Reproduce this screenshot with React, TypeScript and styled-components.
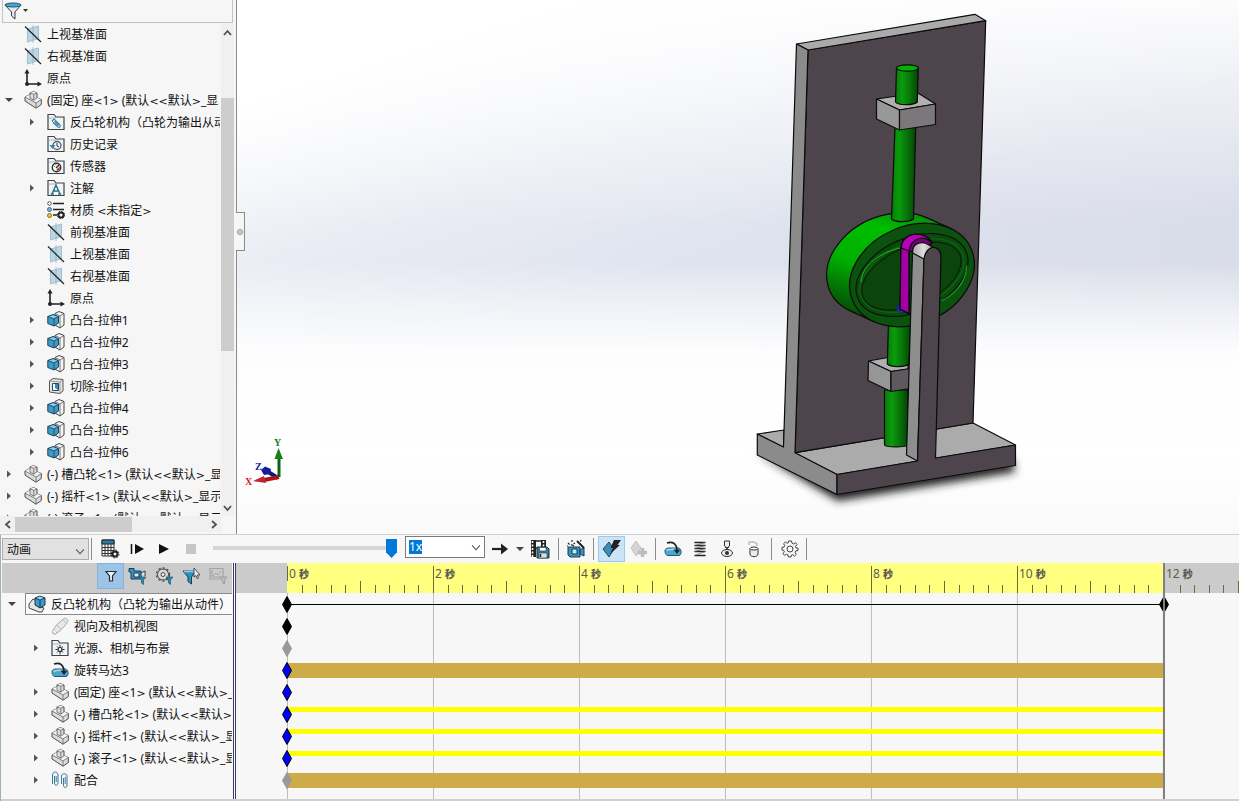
import React from "react";
import styled, { createGlobalStyle } from "styled-components";

const GlobalStyle = createGlobalStyle`
  *, *::before, *::after { box-sizing: border-box; }
  body { margin: 0; background: #f7f7f7; }
  button, input, select { font: inherit; color: inherit; }
  ul { list-style: none; margin: 0; padding: 0; }
`;

const Page = styled.div`
  display: flex;
  flex-direction: column;
  height: 100vh;
  overflow: hidden;
  background: #f7f7f7;
  color: #111;
  font: 12px/22px "Noto Sans", "Noto Sans CJK SC", sans-serif;
`;

const Workspace = styled.main`
  display: flex;
  flex: 1;
  min-height: 0;
`;

const SidePanel = styled.aside`
  display: flex;
  flex-direction: column;
  width: 237px;
  flex: none;
  border-right: 1px solid #8a8a8a;
  background: #f6f6f6;
`;

const FilterBar = styled.div`
  display: flex;
  align-items: center;
  height: 23px;
  flex: none;
  margin: 0 3px 0 2px;
  padding-left: 1px;
  border: 1px solid #c4c4c4;
  border-top: 0;
`;

const PlainButton = styled.button`
  display: flex;
  align-items: center;
  justify-content: center;
  padding: 0;
  border: 0;
  background: none;
`;

const TreeArea = styled.div`
  display: flex;
  flex: 1;
  min-height: 0;
`;

const Tree = styled.ul`
  flex: 1;
  min-width: 0;
  margin-right: 1px;
  overflow: hidden;
`;

const TreeRow = styled.li<{ $indent: number }>`
  display: flex;
  align-items: center;
  height: 22px;
  padding-left: ${(p) => p.$indent}px;
  white-space: nowrap;
`;

const Twisty = styled(PlainButton)<{ $gap: number }>`
  width: 10px;
  height: 22px;
  flex: none;
  margin-right: ${(p) => p.$gap}px;
`;

const IconSlot = styled.span`
  display: flex;
  flex: none;
  width: 18px;
  margin-right: 5px;
`;

const LabelText = styled.span`
  padding-top: 2px;
`;

const Bracket = styled.span`
  font: 11px/22px "DejaVu Sans", sans-serif;
`;

const VScroll = styled.div`
  display: flex;
  flex-direction: column;
  align-items: center;
  width: 13px;
  flex: none;
  margin-right: 2px;
  background: #f0f0f0;
`;

const HScroll = styled.div`
  display: flex;
  align-items: center;
  height: 16px;
  flex: none;
  margin: 0 15px 2px 0;
  background: #f0f0f0;
`;

const ScrollThumb = styled.div<{ $w: string; $h: string; $offset?: number }>`
  width: ${(p) => p.$w};
  height: ${(p) => p.$h};
  flex: none;
  margin-top: ${(p) => p.$offset || 0}px;
  background: #cdcdcd;
`;

const ScrollButton = styled(PlainButton)`
  width: 13px;
  height: 18px;
  margin: 0 1px;
  flex: none;
`;

const Spacer = styled.div`
  flex: 1;
`;

const Viewport = styled.section`
  position: relative;
  flex: 1;
  min-width: 0;
  background:
    linear-gradient(to bottom, transparent 49%, rgba(255, 255, 255, 0.5) 57%, #fdfdfe 66%, #fff 85%, #fafafb 100%),
    linear-gradient(162deg, #fff 12%, rgba(255, 255, 255, 0.3) 32%, rgba(255, 255, 255, 0) 48%),
    linear-gradient(to bottom, rgba(255, 255, 255, 0.9) 0, rgba(255, 255, 255, 0) 42%),
    linear-gradient(to right, #e0e4ef 0, #dfe3ee 50%, #d9dce9 100%);
`;

const Scene = styled.svg`
  display: block;
  width: 100%;
  height: 100%;
`;

const PanelHandle = styled.button`
  position: absolute;
  left: -1px;
  top: 212px;
  width: 9px;
  height: 39px;
  padding: 0;
  border: 1px solid #8a8a8a;
  border-left: 0;
  background: #f6f6f6;
  display: flex;
  align-items: center;
  justify-content: center;
`;

const HandleDot = styled.span`
  width: 6px;
  height: 6px;
  border: 1px solid #999;
  border-radius: 50%;
  background: #ccc;
`;

const MotionStudy = styled.section`
  flex: none;
  border-top: 1px solid #d0d0d0;
  border-left: 1px solid #9fb0b0;
`;

const Toolbar = styled.div`
  display: flex;
  align-items: center;
  height: 27px;
  padding-left: 1px;
`;

const StudySelect = styled.span`
  position: relative;
  display: flex;
  width: 87px;
  height: 22px;
  margin-right: 2px;
  svg { position: absolute; right: 4px; top: 8px; pointer-events: none; }
`;

const Select = styled.select`
  appearance: none;
  width: 100%;
  padding: 0 4px;
  border: 1px solid #adadad;
  border-radius: 0;
  background: #e1e1e1;
`;

const Playback = styled.div`
  display: flex;
  align-items: center;
  padding-left: 4px;
`;

const Rule = styled.span<{ $gap: number }>`
  width: 1px;
  height: 22px;
  flex: none;
  margin: 0 ${(p) => p.$gap}px;
  background: #8c8c8c;
`;

const Tool = styled(PlainButton)<{ $active?: boolean; $w?: number }>`
  width: ${(p) => p.$w || 27}px;
  height: 26px;
  flex: none;
  background: ${(p) => (p.$active ? "#cce4f7" : "none")};
  border: 1px solid ${(p) => (p.$active ? "#99c9ef" : "transparent")};
`;

const SpeedSlider = styled.input`
  appearance: none;
  width: 184px;
  height: 20px;
  margin: 0 8px 0 9px;
  background: linear-gradient(#d6d6d6, #d6d6d6) 0 7px / 100% 4px no-repeat;
  &::-webkit-slider-thumb {
    appearance: none;
    width: 11px;
    height: 19px;
    background: #0078d7;
    clip-path: polygon(0 0, 100% 0, 100% 70%, 50% 100%, 0 70%);
  }
`;

const SpeedBox = styled.div`
  display: flex;
  align-items: center;
  justify-content: space-between;
  width: 80px;
  height: 22px;
  flex: none;
  margin-bottom: 3px;
  padding: 0 3px;
  border: 1px solid #7a7a7a;
  background: #fff;
`;

const SpeedInput = styled.input`
  width: 13px;
  height: 14px;
  padding: 0;
  border: 0;
  background: #0078d7;
  color: #fff;
  line-height: 14px;
`;

const StudyBody = styled.div`
  display: flex;
  border-bottom: 2px solid #cfcfcf;
  padding-top: 1px;
`;

const StudyTree = styled.div`
  width: 231px;
  flex: none;
  padding-left: 1px;
  overflow: hidden;
`;

const StudyFilters = styled.div`
  display: flex;
  justify-content: flex-end;
  height: 30px;
  background: #cbcbcb;
`;

const FilterTool = styled(PlainButton)<{ $active?: boolean }>`
  width: 27px;
  height: 26px;
  background: ${(p) => (p.$active ? "#9dc3e6" : "none")};
  border: 1px solid ${(p) => (p.$active ? "#86b3dc" : "transparent")};
`;

const RootRow = styled.li`
  display: flex;
  height: 22px;
  padding-left: 5px;
  white-space: nowrap;
`;

const RootBox = styled.span`
  display: flex;
  flex: 1;
  align-items: center;
  padding-left: 2px;
  border: 1px solid #8a8a8a;
  border-right: 0;
  background: #fafafa;
`;

const Divider = styled.div`
  width: 3px;
  flex: none;
  margin-left: 1px;
  border: 1px solid #3a3a66;
  border-width: 0 1px;
  background: #fff;
`;

const Timeline = styled.div`
  flex: 1;
  min-width: 0;
`;

const Lane = styled.div<{ $h: number }>`
  display: flex;
  height: ${(p) => p.$h}px;
`;

const Lead = styled.div<{ $ruler?: boolean }>`
  width: 51px;
  flex: none;
  background: ${(p) => (p.$ruler ? "#cbcbcb" : "none")};
`;

const Tail = styled.div<{ $ruler?: boolean }>`
  position: relative;
  z-index: 1;
  width: 76px;
  flex: none;
  overflow: hidden;
  border-left: 2px solid #808080;
  background: ${(p) => (p.$ruler ? "#cbcbcb" : "none")};
`;

const RulerRange = styled.div`
  display: grid;
  grid-template-columns: repeat(6, 1fr);
  flex: 1;
  background: #ffff80;
`;

const Segment = styled.div<{ $fixed?: boolean }>`
  display: flex;
  flex-direction: column;
  justify-content: space-between;
  width: ${(p) => (p.$fixed ? "146px" : "auto")};
  height: 30px;
  color: #5c5c50;
`;

const SegmentLabel = styled.span<{ $plain?: boolean }>`
  height: 15px;
  margin-top: 3px;
  padding-left: 1px;
  border-left: ${(p) => (p.$plain ? "0" : "1px solid #6b6b3a")};
  line-height: 15px;
  b { font-size: 10px; font-weight: 900; }
`;

const Ticks = styled.div`
  display: grid;
  grid-template-columns: repeat(10, 1fr);
  align-items: end;
  height: 12px;
`;

const Tick = styled.i<{ $h: number; $plain?: boolean }>`
  height: ${(p) => p.$h}px;
  border-left: 1px solid ${(p) => (p.$plain ? "transparent" : "#6b6b3a")};
`;

const Track = styled.div`
  position: relative;
  flex: 1;
  background: linear-gradient(to right, #bdbdbd 1px, transparent 1px) 0 0 / calc(100% / 6) 100%;
`;

const barStyles = {
  line: { top: 11, height: 1, color: "#000" },
  motor: { top: 4, height: 15, color: "#cdab48" },
  part: { top: 4, height: 5, color: "#ffff00" },
};

const Bar = styled.div<{ $kind: keyof typeof barStyles }>`
  height: ${(p) => barStyles[p.$kind].top + barStyles[p.$kind].height}px;
  border-top: ${(p) => barStyles[p.$kind].top}px solid transparent;
  background: ${(p) => barStyles[p.$kind].color};
  background-clip: padding-box;
`;

const KeyPoint = styled.svg<{ $end?: boolean }>`
  position: absolute;
  top: 3px;
  ${(p) => (p.$end ? "right: -6px;" : "left: -5px;")}
`;

/* ---------- icons ---------- */

type SvgProps = { w?: number; h?: number; children: React.ReactNode };
const Svg = ({ w = 18, h = 18, children }: SvgProps) => (
  <svg width={w} height={h} viewBox={`0 0 ${w} ${h}`} fill="none" aria-hidden="true">
    {children}
  </svg>
);

const Chevron = ({ dir, w = 9 }: { dir: "up" | "down" | "left" | "right"; w?: number }) => {
  const paths = { up: "M1 7 4.5 3 8 7", down: "M1 3 4.5 7 8 3", left: "M7 1 3 4.5 7 8", right: "M3 1 7 4.5 3 8" };
  return (
    <svg width={w} height={w} viewBox="0 0 9 9" fill="none" aria-hidden="true">
      <path d={paths[dir]} stroke="#505050" strokeWidth={w > 9 ? 1 : 1.8} />
    </svg>
  );
};

const ClosedMark = () => <Svg w={6} h={8}><path d="M1 0.5 5 4 1 7.5Z" fill="#555" /></Svg>;
const OpenMark = () => <Svg w={8} h={6}><path d="M0 1H8L4 5Z" fill="#444" /></Svg>;

const PlaneIcon = () => (
  <Svg>
    <path d="M3.500 4 14.500 1V13.500L3.500 17Z" fill="#bcd7e3" stroke="#93b6c6" strokeWidth=".8" />
    <path d="M9 0V18" stroke="#8fa9b5" strokeWidth=".7" />
    <path d="M1 1.500 17 17" stroke="#1c2226" strokeWidth="1.200" />
  </Svg>
);
const OriginIcon = () => (
  <Svg>
    <path d="M3 15V3M3 15H16" stroke="#222" strokeWidth="1.600" />
    <path d="M3 0 5.500 4.500H.5ZM18 15 13.500 12.500V17.500Z" fill="#222" />
    <circle cx="3" cy="15" r="2" fill="#222" />
  </Svg>
);
const PartIcon = () => (
  <Svg>
    <path d="M1 6 6 3.500V1.800L9.500.7 13 2V6.800L17.300 8.500V13.500L12 17.200 1 10Z" fill="#dcdcdc" stroke="#4d4d4d" strokeLinejoin="round" />
    <path d="M6 1.800 9.500.7 13 2 9.800 3.300ZM1 6 6 3.500V7.200L9.800 9.200 13 6.800 17.300 8.500 12 12Z" fill="#f4f4f4" />
    <path d="M6 1.800 9.800 3.300 13 2M9.800 3.300V9.200M6 3.500V7.200L9.800 9.200 13 6.800M1 6 12 12 17.300 8.500M12 12V17.200" stroke="#666" strokeWidth=".8" strokeLinejoin="round" />
  </Svg>
);
const FolderIcon = ({ children }: { children: React.ReactNode }) => (
  <Svg>
    <path d="M1 16.500V1.500H7L9 4H17V16.500Z" fill="#f3f4f5" stroke="#3d4347" strokeWidth="1.200" />
    <path d="M1.500 5H9" stroke="#9aa0a3" strokeWidth=".8" />
    {children}
  </Svg>
);
const ClipFolder = () => (
  <FolderIcon>
    <path d="M5 8 7 6 13 12C14 13.500 12.500 15 11 14L6 9.500M7.500 8.500 11.500 12.500" stroke="#3c84a8" strokeWidth="1.200" />
    <path d="M5 8 10.500 13.500" stroke="#3c84a8" />
  </FolderIcon>
);
const HistoryFolder = () => (
  <FolderIcon>
    <circle cx="10" cy="10.500" r="4" stroke="#3d5f75" strokeWidth="1.300" />
    <path d="M10 8V11L12 12" stroke="#333" />
    <path d="M2.500 10H8.500L5.500 14Z" fill="#3c84a8" />
  </FolderIcon>
);
const SensorFolder = () => (
  <FolderIcon>
    <circle cx="9.500" cy="10.500" r="4.200" fill="#fff" stroke="#2d2d2d" strokeWidth="1.400" />
    <path d="M9 11 12 8" stroke="#222" strokeWidth="1.200" />
    <path d="M9.500 12.500 13 9.500 12.500 12.500 10 14Z" fill="#c1272d" />
    <path d="M7 9.500h1M8.500 8h1" stroke="#4aa04a" />
  </FolderIcon>
);
const NoteFolder = () => (
  <FolderIcon>
    <path d="M5 15 9 6 13 15M6.500 12H11.500M3.800 15h3M11.200 15h3" stroke="#23708f" strokeWidth="1.500" />
  </FolderIcon>
);
const LightFolder = () => (
  <FolderIcon>
    <circle cx="9" cy="10.500" r="2" stroke="#222" strokeWidth="1.200" />
    <path d="M9 6v2M9 13v2.500M4.500 10.500h2M11.500 10.500h2M6 7.500l1.300 1.300M12 7.500l-1.300 1.300M6 13.500l1.300-1.300M12 13.500l-1.300-1.300" stroke="#222" />
  </FolderIcon>
);
const MaterialIcon = () => (
  <Svg>
    <path d="M6 2.500H17M6 8.500H17M6 14H10" stroke="#222" strokeWidth="1.600" />
    <circle cx="2.500" cy="2.500" r="1.800" fill="#fff" stroke="#555" />
    <circle cx="2.500" cy="8.500" r="2" fill="#6fb2dd" stroke="#3d6f96" />
    <circle cx="2.500" cy="14.500" r="2" fill="#f2c423" stroke="#8a6d14" />
    <circle cx="14" cy="14" r="2.600" stroke="#222" strokeWidth="2" />
    <circle cx="14" cy="14" r="3.600" stroke="#222" strokeDasharray="1.400 1.400" />
  </Svg>
);
const BossIcon = () => (
  <Svg>
    <path d="M8 2.500 12 .5 17 2.500V14L13 17 8 14Z" fill="#f5f5f5" stroke="#444" strokeLinejoin="round" />
    <path d="M13 5 17 2.500M13 5V17M8 2.500 13 5" stroke="#555" strokeWidth=".8" />
    <path d="M.8 5.500 6 3.500 11.500 5.500V12L7 15 .8 12.500Z" fill="#3f9ac6" stroke="#17455f" strokeLinejoin="round" />
    <path d="M1.800 5.700 6 4.200 10.300 5.700 7 7.500Z" fill="#8ccbe6" />
    <path d="M.8 5.500 7 8 11.500 5.500M7 8V15" stroke="#17455f" strokeWidth=".8" />
  </Svg>
);
const CutIcon = () => (
  <Svg>
    <path d="M2.500 4 6 1.500 16 2.500V14L13 16.500 2.500 15Z" fill="#e4e8ea" stroke="#555" strokeLinejoin="round" />
    <path d="M2.500 4 13 5 16 2.500M13 5V16.500" stroke="#888" strokeWidth=".8" />
    <path d="M5.500 6.500H11.500V13.500H5.500Z" fill="#fff" stroke="#345" />
    <path d="M8 7H11V13L8 11Z" fill="#3089b8" />
  </Svg>
);
const AssemblyIcon = () => (
  <Svg>
    <path d="M1 9 5 4 9 6 9 11 16 13 14 17 11 17 1 13Z" fill="#e6e6e6" stroke="#444" strokeLinejoin="round" />
    <path d="M7 3 12 1 17 3V10L12 13 7 10Z" fill="#3f9ac6" stroke="#17384d" strokeLinejoin="round" />
    <path d="M7 3 12 5 17 3M12 5V13" stroke="#17384d" />
    <path d="M8.500 3 12 1.600 15.500 3 12 4.400Z" fill="#9bd3ea" />
  </Svg>
);
const CameraViewIcon = () => (
  <Svg>
    <path d="M2 13 5.500 8 13 1.500C15 .5 18 3.500 16.500 5.500L10.500 12.500 4.500 17C2 17.500.5 16 2 13Z" fill="#e9e9e9" stroke="#a8a8a8" strokeLinejoin="round" />
    <path d="M5.500 8 10.500 12.500M12 2.500 15.500 6.500" stroke="#b5b5b5" />
    <ellipse cx="3.500" cy="14.800" rx="1.500" ry="2.200" transform="rotate(-40 3.500 14.800)" fill="#fff" stroke="#b5b5b5" strokeWidth=".7" />
  </Svg>
);
const MotorIcon = () => (
  <Svg>
    <path d="M1 11C1 8 4 8 6 8H14C18 8 18 15 15 15.500H5C2 16 1 13 1 11Z" fill="#4ca4cf" stroke="#1f5a78" />
    <path d="M2.500 10.500C5 9 12 9 16 10" stroke="#aadcf0" strokeWidth="1.500" />
    <path d="M3 3C9 1 13 4 13 11" stroke="#1d2326" strokeWidth="1.800" />
    <path d="M9.500 9.500H16.500L13 14Z" fill="#1d2326" />
  </Svg>
);
const MatesIcon = () => (
  <Svg>
    <path d="M1.500 13V4C1.500 0 7 0 7 4V12C7 15 3.500 15 3.500 12V5M5.200 5V11" stroke="#37789b" />
    <path d="M10.500 13V5C10.500 2 16 2 16 5V14C16 18 12.500 17 12.500 14V7M14.200 6V13" stroke="#37789b" />
  </Svg>
);
const BigFunnel = () => (
  <Svg w={19} h={18}>
    <path d="M1 3H17L11 10V17L7.500 14V10Z" fill="#e3e7ea" stroke="#3a3f43" strokeLinejoin="round" />
    <ellipse cx="9" cy="3" rx="8" ry="2" fill="#48a4d0" stroke="#24566f" />
  </Svg>
);
const FunnelMini = () => <path d="M11 10H18L15.500 13V17.500L13.500 16V13Z" fill="#2c86b3" stroke="#174c68" strokeWidth=".6" />;

const CalcIcon = () => (
  <Svg w={20} h={20}>
    <path d="M2 1H14V17H2Z" fill="#f4f8fa" stroke="#333" />
    <path d="M2 1H14V5H2Z" fill="#2a7ca6" stroke="#222" />
    <path d="M2 8.500H14M2 11.500H14M2 14.500H14M5 5V17M8 5V17M11 5V17" stroke="#333" />
    <circle cx="15" cy="15" r="2.500" fill="#eee" stroke="#222" strokeWidth="2" />
    <circle cx="15" cy="15" r="4" stroke="#222" strokeDasharray="1.600 1.500" />
  </Svg>
);
const StepIcon = () => <Svg w={16} h={12}><path d="M2.500 1V11" stroke="#111" strokeWidth="1.500" /><path d="M6 1 15 6 6 11Z" fill="#111" /></Svg>;
const PlayIcon = () => <Svg w={12} h={12}><path d="M1 1 11 6 1 11Z" fill="#111" /></Svg>;
const StopIcon = () => <Svg w={12} h={12}><path d="M1 1H11V11H1Z" fill="#c6c6c6" /></Svg>;
const ArrowIcon = () => <Svg w={16} h={12}><path d="M0 6H10" stroke="#222" strokeWidth="2.200" /><path d="M9 .5 16 6 9 11.500Z" fill="#222" /></Svg>;
const SaveFilmIcon = () => (
  <Svg w={20} h={20}>
    <path d="M1 1H6V18H1ZM11 1H16V9H11Z" fill="#222" />
    <path d="M2.500 2V18M13.500 2V8" stroke="#fff" strokeWidth="1.600" strokeDasharray="2 1.500" />
    <path d="M6 2H11M6 9H10" stroke="#222" strokeWidth="1.500" />
    <path d="M7 8H17L19 10V19H7Z" fill="#377fa3" stroke="#1b323e" />
    <path d="M9.500 8.500H16V12H9.500Z" fill="#fff" stroke="#333" strokeWidth=".6" />
    <path d="M9 14H17V19H9Z" fill="#cfe3ec" stroke="#333" strokeWidth=".6" />
    <path d="M10.500 15V18" stroke="#222" strokeWidth="1.500" />
  </Svg>
);
const WandIcon = () => (
  <Svg w={20} h={20}>
    <path d="M2 8H14V18H4L2 16Z" fill="#3a93bd" stroke="#163d52" />
    <path d="M14 11 18 8.500V17L14 15Z" fill="#3a93bd" stroke="#163d52" />
    <path d="M6 10H11V15H6Z" fill="#c5e6f3" stroke="#163d52" />
    <path d="M11 2 18 9" stroke="#222" strokeWidth="2" />
    <path d="M2 4 3.500 5.500M6 1V3M9 4 7.500 5M15 1 14.500 2.500M1 7H2M5 5.500 8 7" stroke="#222" strokeWidth="1.200" />
  </Svg>
);
const AutoKeyIcon = () => (
  <Svg w={20} h={20}>
    <path d="M7 3 12 10 7 18 1 10Z" fill="#3b8db5" stroke="#1c4d67" />
    <path d="M12 1H19L15.500 6H18L8 15 11 9H8.500Z" fill="#222" />
  </Svg>
);
const AddKeyIcon = () => (
  <Svg w={20} h={20}>
    <path d="M7 2 12 9 7 17 2 9Z" fill="#d4d4d4" stroke="#c2c2c2" />
    <path d="M13.500 9V18M9 13.500H18" stroke="#bcbcbc" strokeWidth="3.500" />
  </Svg>
);
const SpringIcon = () => (
  <Svg w={16} h={18}>
    <path d="M3 2.500H13M3 5.500H13M3 8.500H13M3 11.500H13M3 15.500H13" stroke="#222" strokeWidth="1.400" strokeLinecap="round" />
    <path d="M13 2.500 3 5.500M13 5.500 3 8.500M13 8.500 3 11.500M13 11.500 3 15.500" stroke="#666" strokeWidth=".7" />
  </Svg>
);
const ContactIcon = () => (
  <Svg w={16} h={18}>
    <path d="M5.500 1H10.500V6L8 8 5.500 6ZM6 7 10 10M10 7 6 10" fill="#eee" stroke="#333" />
    <ellipse cx="8" cy="13" rx="5.500" ry="3.500" fill="#eee" stroke="#333" />
    <circle cx="8" cy="13" r="2" fill="#333" />
  </Svg>
);
const GravityIcon = () => (
  <Svg w={16} h={18}>
    <path d="M3 2H8L11 4V6M3 2V5" stroke="#bdbdbd" strokeWidth="1.500" />
    <path d="M4 8.500V14C4 17.500 12 17.500 12 14V8.500" fill="#ededed" stroke="#333" />
    <ellipse cx="8" cy="8.500" rx="4" ry="1.500" fill="#fff" stroke="#333" />
  </Svg>
);
const GearIcon = () => (
  <Svg>
    <path
      d="M7.500 1H10.500L11 3.200 12.500 3.900 14.500 2.700 16 4.500 14.500 6.500 15 8H17V10.500L14.800 11 14.200 12.500 15.300 14.300 13.500 16 11.500 14.600 10.500 15 10 17H7.500L7 14.900 5.500 14.300 3.700 15.400 2 13.700 3.300 11.700 2.900 10.500 1 10V7.500L3.100 7 3.700 5.500 2.600 3.700 4.400 2 6.300 3.300 7.200 2.900Z"
      fill="#f5f5f5" stroke="#444" strokeLinejoin="round"
    />
    <circle cx="9" cy="9" r="3" stroke="#444" fill="#f7f7f7" />
  </Svg>
);
const FunnelLine = () => <Svg w={14} h={14}><path d="M2 2.500H12L8.500 7V12H5.500V7Z" fill="#eef5fa" stroke="#1f2a33" strokeWidth="1.200" /></Svg>;
const CameraFilter = () => (
  <Svg w={19} h={18}>
    <path d="M1 1.500H6V4H13V12H3V5H1Z" fill="#3a93bd" stroke="#163d52" />
    <path d="M13 6 17 4V9M6 6H11V10H6Z" fill="#d8edf6" stroke="#163d52" />
    <FunnelMini />
  </Svg>
);
const GearFilter = () => (
  <Svg w={19} h={18}>
    <circle cx="8" cy="7.500" r="5.500" fill="#d8d8d8" stroke="#444" />
    <circle cx="8" cy="7.500" r="6.500" stroke="#555" strokeWidth="1.400" strokeDasharray="2.200 2" />
    <circle cx="8" cy="7.500" r="2" fill="#eee" stroke="#444" />
    <FunnelMini />
  </Svg>
);
const SelectFilter = () => (
  <Svg w={19} h={18}>
    <path d="M1 4H14L9.500 10V17L6 14.500V10Z" fill="#2f8ebd" stroke="#153f55" />
    <path d="M2 4.500H13" stroke="#8bd0ec" strokeWidth="1.500" />
    <path d="M12 1 18 8 15.500 8 16.500 11 15 11.500 14 8.500 12 10Z" fill="#e9e9e9" stroke="#333" strokeWidth=".8" />
  </Svg>
);
const GraphFilter = () => (
  <Svg w={19} h={18}>
    <path d="M1 1.500H14V12H1ZM3 3V10H12" stroke="#a5a5a5" strokeWidth="1.200" />
    <path d="M4 9 7 6 9 8 12 4" stroke="#a5a5a5" />
    <path d="M11 10H18L15.500 13V17L13.500 16V13Z" fill="#bdbdbd" stroke="#a0a0a0" />
  </Svg>
);

/* ---------- data ---------- */

type Node = { text: string; icon: React.FC; level: 0 | 1; mark?: "open" | "closed" };

const features: Node[] = [
  { text: "上视基准面", icon: PlaneIcon, level: 0 },
  { text: "右视基准面", icon: PlaneIcon, level: 0 },
  { text: "原点", icon: OriginIcon, level: 0 },
  { text: "(固定) 座<1> (默认<<默认>_显", icon: PartIcon, level: 0, mark: "open" },
  { text: "反凸轮机构（凸轮为输出从动", icon: ClipFolder, level: 1, mark: "closed" },
  { text: "历史记录", icon: HistoryFolder, level: 1 },
  { text: "传感器", icon: SensorFolder, level: 1 },
  { text: "注解", icon: NoteFolder, level: 1, mark: "closed" },
  { text: "材质 <未指定>", icon: MaterialIcon, level: 1 },
  { text: "前视基准面", icon: PlaneIcon, level: 1 },
  { text: "上视基准面", icon: PlaneIcon, level: 1 },
  { text: "右视基准面", icon: PlaneIcon, level: 1 },
  { text: "原点", icon: OriginIcon, level: 1 },
  { text: "凸台-拉伸1", icon: BossIcon, level: 1, mark: "closed" },
  { text: "凸台-拉伸2", icon: BossIcon, level: 1, mark: "closed" },
  { text: "凸台-拉伸3", icon: BossIcon, level: 1, mark: "closed" },
  { text: "切除-拉伸1", icon: CutIcon, level: 1, mark: "closed" },
  { text: "凸台-拉伸4", icon: BossIcon, level: 1, mark: "closed" },
  { text: "凸台-拉伸5", icon: BossIcon, level: 1, mark: "closed" },
  { text: "凸台-拉伸6", icon: BossIcon, level: 1, mark: "closed" },
  { text: "(-) 槽凸轮<1> (默认<<默认>_显", icon: PartIcon, level: 0, mark: "closed" },
  { text: "(-) 摇杆<1> (默认<<默认>_显示", icon: PartIcon, level: 0, mark: "closed" },
  { text: "(-) 滚子<1> (默认<<默认>_显示", icon: PartIcon, level: 0, mark: "closed" },
];

const studyItems: Node[] = [
  { text: "视向及相机视图", icon: CameraViewIcon, level: 1 },
  { text: "光源、相机与布景", icon: LightFolder, level: 1, mark: "closed" },
  { text: "旋转马达3", icon: MotorIcon, level: 1 },
  { text: "(固定) 座<1> (默认<<默认>_", icon: PartIcon, level: 1, mark: "closed" },
  { text: "(-) 槽凸轮<1> (默认<<默认>", icon: PartIcon, level: 1, mark: "closed" },
  { text: "(-) 摇杆<1> (默认<<默认>_显", icon: PartIcon, level: 1, mark: "closed" },
  { text: "(-) 滚子<1> (默认<<默认>_显", icon: PartIcon, level: 1, mark: "closed" },
  { text: "配合", icon: MatesIcon, level: 1, mark: "closed" },
];

const tracks: { key: string; bar?: keyof typeof barStyles; end?: boolean }[] = [
  { key: "#000", bar: "line", end: true },
  { key: "#000" },
  { key: "#999" },
  { key: "#00f", bar: "motor" },
  { key: "#00f" },
  { key: "#00f", bar: "part" },
  { key: "#00f", bar: "part" },
  { key: "#00f", bar: "part" },
  { key: "#999", bar: "motor" },
];

/* ---------- parts ---------- */

const Label = ({ text }: { text: string }) => (
  <LabelText>
    {text.split(/([<>]+)/).map((piece, i) => (/^[<>]+$/.test(piece) ? <Bracket key={i}>{piece}</Bracket> : piece))}
  </LabelText>
);

const Row = ({ node, base }: { node: Node; base: number }) => {
  const Icon = node.icon;
  const indent = base + node.level * 23;
  const gap = 10;
  return (
    <TreeRow $indent={node.mark ? indent : indent + 10 + gap}>
      {node.mark && (
        <Twisty $gap={gap} aria-label={node.mark === "open" ? "折叠" : "展开"}>
          {node.mark === "open" ? <OpenMark /> : <ClosedMark />}
        </Twisty>
      )}
      <IconSlot><Icon /></IconSlot>
      <Label text={node.text} />
    </TreeRow>
  );
};

const RulerSegment = ({ label, fixed }: { label: number; fixed?: boolean }) => {
  const plain = label === 0 || fixed;
  return (
    <Segment $fixed={fixed}>
      <SegmentLabel $plain={fixed}>{label} <b>秒</b></SegmentLabel>
      <Ticks>
        {Array.from({ length: 10 }, (_, i) => (
          <Tick key={i} $h={i % 5 === 0 ? 12 : 8} $plain={plain && i === 0} />
        ))}
      </Ticks>
    </Segment>
  );
};

const Diamond = ({ color, end }: { color: string; end?: boolean }) => (
  <KeyPoint $end={end} width="10" height="17" viewBox="0 0 10 17" aria-hidden="true">
    <path d="M5 .5 9.500 8.500 5 16.500.5 8.500Z" fill={color} stroke={color === "#999" ? "#999" : "#000"} />
  </KeyPoint>
);

const Model = () => (
  <Scene viewBox="237 0 1002 534" preserveAspectRatio="xMidYMid meet" role="img" aria-label="反凸轮机构">
    <defs>
      <linearGradient id="rod" x1="0" x2="1" y1="0" y2="0">
        <stop offset="0" stopColor="#087a0a" />
        <stop offset=".3" stopColor="#0a9c0c" />
        <stop offset=".65" stopColor="#087209" />
        <stop offset="1" stopColor="#034404" />
      </linearGradient>
      <linearGradient id="rim" x1=".7" y1="0" x2=".35" y2="1">
        <stop offset="0" stopColor="#068f08" />
        <stop offset=".2" stopColor="#00bd00" />
        <stop offset=".55" stopColor="#00b000" />
        <stop offset=".8" stopColor="#047306" />
        <stop offset="1" stopColor="#034a04" />
      </linearGradient>
      <linearGradient id="cap" x1="0" x2="1" y1="0" y2="0">
        <stop offset="0" stopColor="#a5a5a5" />
        <stop offset=".4" stopColor="#dedede" />
        <stop offset="1" stopColor="#858585" />
      </linearGradient>
      <filter id="soft" x="-20%" y="-50%" width="140%" height="200%">
        <feGaussianBlur stdDeviation="4" />
      </filter>
    </defs>

    <path d="M757 453 838 501 1015 472 1013 460 838 480Z" fill="#222" filter="url(#soft)" />

    <g stroke="#0b0b0b" strokeWidth="1.200" strokeLinejoin="round" strokeLinecap="round">
      <path d="M757.300 434 784 430 783.500 447 795 452.700 973 423 1015.500 445 837 474.500Z" fill="#ababab" />
      <path d="M808 50 985.700 20.700 973 423 795 452.700Z" fill="#4d444c" />
      <path d="M796.500 44 975 14.300 985.700 20.700 808 50Z" fill="#aaa" />
      <path d="M796.500 44 808 50 795 452.700 837 474.500V494.500L757.300 455V434L783.500 447Z" fill="#8b8b8b" />

      <path d="M884.500 445V390H908V445C906 447.500 886 447.500 884.500 445Z" fill="url(#rod)" />
      <path d="M868.500 361 888 357.500 908 364V369L891 371.500Z" fill="#b0b0b0" />
      <path d="M868.500 361 891 371.500V391.500L868 380.500Z" fill="#969696" />
      <path d="M891 371.500 910 368.500V388.500L891 391.500Z" fill="#5f585f" />
      <path d="M888.500 322 887.300 364C891 367.500 905 367.500 909 364L911 322Z" fill="url(#rod)" />

      <path d="M873.800 321.600 850.800 311.100A64.700 48.700 -24 0 1 927.200 217.900L950.200 228.400Z" fill="url(#rim)" />
      <ellipse cx="912" cy="275" rx="64.700" ry="48.700" transform="rotate(-24 912 275)" fill="#0b520e" />
      <g strokeWidth="1">
        <ellipse cx="912" cy="275" rx="59" ry="37" transform="rotate(-24 912 275)" fill="#0b4a0d" />
        <ellipse cx="912" cy="275.500" rx="55" ry="32" transform="rotate(-24 912 275.500)" fill="none" stroke="#0d6a10" />
        <ellipse cx="911.500" cy="276" rx="53" ry="29" transform="rotate(-24 911.500 276)" fill="#0b450d" strokeWidth=".8" />
      </g>
      <path d="M861 282C861 268 877 253 900 248M967 266C966 282 955 295 941 301" fill="none" stroke="#2bbb2b" strokeWidth=".9" />
      <path d="M900 306H897V310L902 313" fill="#1b2bb8" stroke="#122090" />

      <path d="M895 127 891.500 219C895 222.500 909 222.500 913.500 219L915.700 127Z" fill="url(#rod)" />
      <path d="M876.500 99 918 93 935.500 104 899.500 110Z" fill="#b0b0b0" />
      <path d="M876.500 99 899.500 110V130L876.500 119Z" fill="#989898" />
      <path d="M899.500 110 935.500 104V124.500L899.500 130Z" fill="#7b777b" />
      <path d="M896.500 68 895.500 102C898 105.500 914 105.500 917.300 102L918.300 68Z" fill="url(#rod)" />
      <ellipse cx="907.400" cy="68" rx="10.900" ry="3.200" fill="#04b204" />

      <path d="M909 251V314L900 309 901 248C902 231 926 230 932 243L922 252Z" fill="#750075" />
      <path d="M901 248C902 231 926 230 932 243C924 234 911 238 909 251Z" fill="#b800b8" />
      <path d="M901 248 909 251V313.500L900 309Z" fill="#a300a3" />

      <path d="M912.500 253C912 243 922 240 929 245L940 252 924 262Z" fill="url(#cap)" />
      <path d="M912.500 253 924 259 917.500 461 906.500 455Z" fill="#8e8e8e" />
      <path d="M924 259C926 244 940 244 941 256L935.500 458 1015.500 445V465.500L837 494.500V474.500L917.500 461Z" fill="#4d444c" />
    </g>

    <g fontFamily="Liberation Serif, serif" fontSize="10" fontWeight="700">
      <path d="M279 477V459" stroke="#0b640f" strokeWidth="3" />
      <path d="M278.500 448 283 459H274.500Z" fill="#16801b" />
      <path d="M278 478 265 470" stroke="#15157a" strokeWidth="4" />
      <path d="M261 470 265 466.500 271 469 270 474 264 475Z" fill="#1818a0" />
      <path d="M279 477 264 480" stroke="#a8151d" strokeWidth="4" />
      <path d="M253 481 264 476 266 483Z" fill="#c4242b" />
      <text x="274" y="446" fill="#177a1c">Y</text>
      <text x="255" y="470" fill="#1818a0">Z</text>
      <text x="245" y="485" fill="#d0202a">X</text>
    </g>
  </Scene>
);

export default function App() {
  return (
    <Page lang="zh-CN">
      <GlobalStyle />
      <Workspace>
        <SidePanel>
          <FilterBar>
            <PlainButton aria-label="过滤器">
              <BigFunnel />
              <Svg w={6} h={4}><path d="M0 0H5L2.500 3Z" fill="#333" /></Svg>
            </PlainButton>
          </FilterBar>
          <TreeArea>
            <Tree>
              {features.map((n, i) => <Row key={i} node={n} base={4} />)}
            </Tree>
            <VScroll>
              <ScrollButton aria-label="向上滚动"><Chevron dir="up" /></ScrollButton>
              <ScrollThumb $w="13px" $h="253px" $offset={57} />
              <Spacer />
              <ScrollButton aria-label="向下滚动"><Chevron dir="down" /></ScrollButton>
            </VScroll>
          </TreeArea>
          <HScroll>
            <ScrollButton aria-label="向左滚动"><Chevron dir="left" /></ScrollButton>
            <ScrollThumb $w="117px" $h="15px" />
            <Spacer />
            <ScrollButton aria-label="向右滚动"><Chevron dir="right" /></ScrollButton>
          </HScroll>
        </SidePanel>
        <Viewport>
          <Model />
          <PanelHandle aria-label="折叠面板"><HandleDot /></PanelHandle>
        </Viewport>
      </Workspace>

      <MotionStudy>
        <Toolbar>
          <StudySelect>
            <Select aria-label="算例类型"><option>动画</option></Select>
            <Chevron dir="down" w={10} />
          </StudySelect>
          <Rule $gap={0} />
          <Playback>
            <Tool aria-label="计算"><CalcIcon /></Tool>
            <Tool aria-label="从头播放"><StepIcon /></Tool>
            <Tool aria-label="播放"><PlayIcon /></Tool>
            <Tool aria-label="停止"><StopIcon /></Tool>
            <SpeedSlider type="range" aria-label="时间" min={0} max={100} defaultValue={100} />
          </Playback>
          <SpeedBox>
            <SpeedInput aria-label="播放速度" defaultValue="1x" />
            <PlainButton aria-label="选择速度"><Chevron dir="down" w={10} /></PlainButton>
          </SpeedBox>
          <Tool $w={30} aria-label="播放模式"><ArrowIcon /></Tool>
          <Tool $w={10} aria-label="更多模式"><OpenMark /></Tool>
          <Tool $w={30} aria-label="保存动画"><SaveFilmIcon /></Tool>
          <Rule $gap={3} />
          <Tool aria-label="动画向导"><WandIcon /></Tool>
          <Rule $gap={4} />
          <Tool $active aria-label="自动键码"><AutoKeyIcon /></Tool>
          <Tool aria-label="添加键码"><AddKeyIcon /></Tool>
          <Rule $gap={3} />
          <Tool aria-label="马达"><MotorIcon /></Tool>
          <Tool aria-label="弹簧"><SpringIcon /></Tool>
          <Tool aria-label="接触"><ContactIcon /></Tool>
          <Tool aria-label="引力"><GravityIcon /></Tool>
          <Rule $gap={4} />
          <Tool aria-label="属性"><GearIcon /></Tool>
          <Rule $gap={3} />
        </Toolbar>

        <StudyBody>
          <StudyTree>
            <StudyFilters>
              <FilterTool $active aria-label="无过滤"><FunnelLine /></FilterTool>
              <FilterTool aria-label="过滤动画"><CameraFilter /></FilterTool>
              <FilterTool aria-label="过滤驱动"><GearFilter /></FilterTool>
              <FilterTool aria-label="过滤选定"><SelectFilter /></FilterTool>
              <FilterTool aria-label="过滤结果"><GraphFilter /></FilterTool>
            </StudyFilters>
            <ul>
              <RootRow>
                <Twisty $gap={8} aria-label="折叠"><OpenMark /></Twisty>
                <RootBox>
                  <IconSlot><AssemblyIcon /></IconSlot>
                  <Label text="反凸轮机构（凸轮为输出从动件）" />
                </RootBox>
              </RootRow>
              {studyItems.map((n, i) => <Row key={i} node={n} base={6} />)}
            </ul>
          </StudyTree>
          <Divider />
          <Timeline>
            <Lane $h={30}>
              <Lead $ruler />
              <RulerRange>
                {[0, 2, 4, 6, 8, 10].map((t) => <RulerSegment key={t} label={t} />)}
              </RulerRange>
              <Tail $ruler><RulerSegment label={12} fixed /></Tail>
            </Lane>
            {tracks.map((t, i) => (
              <Lane $h={22} key={i}>
                <Lead />
                <Track>
                  {t.bar && <Bar $kind={t.bar} />}
                  <Diamond color={t.key} />
                  {t.end && <Diamond color={t.key} end />}
                </Track>
                <Tail />
              </Lane>
            ))}
            <Lane $h={8}>
              <Lead />
              <Track />
              <Tail />
            </Lane>
          </Timeline>
        </StudyBody>
      </MotionStudy>
    </Page>
  );
}
